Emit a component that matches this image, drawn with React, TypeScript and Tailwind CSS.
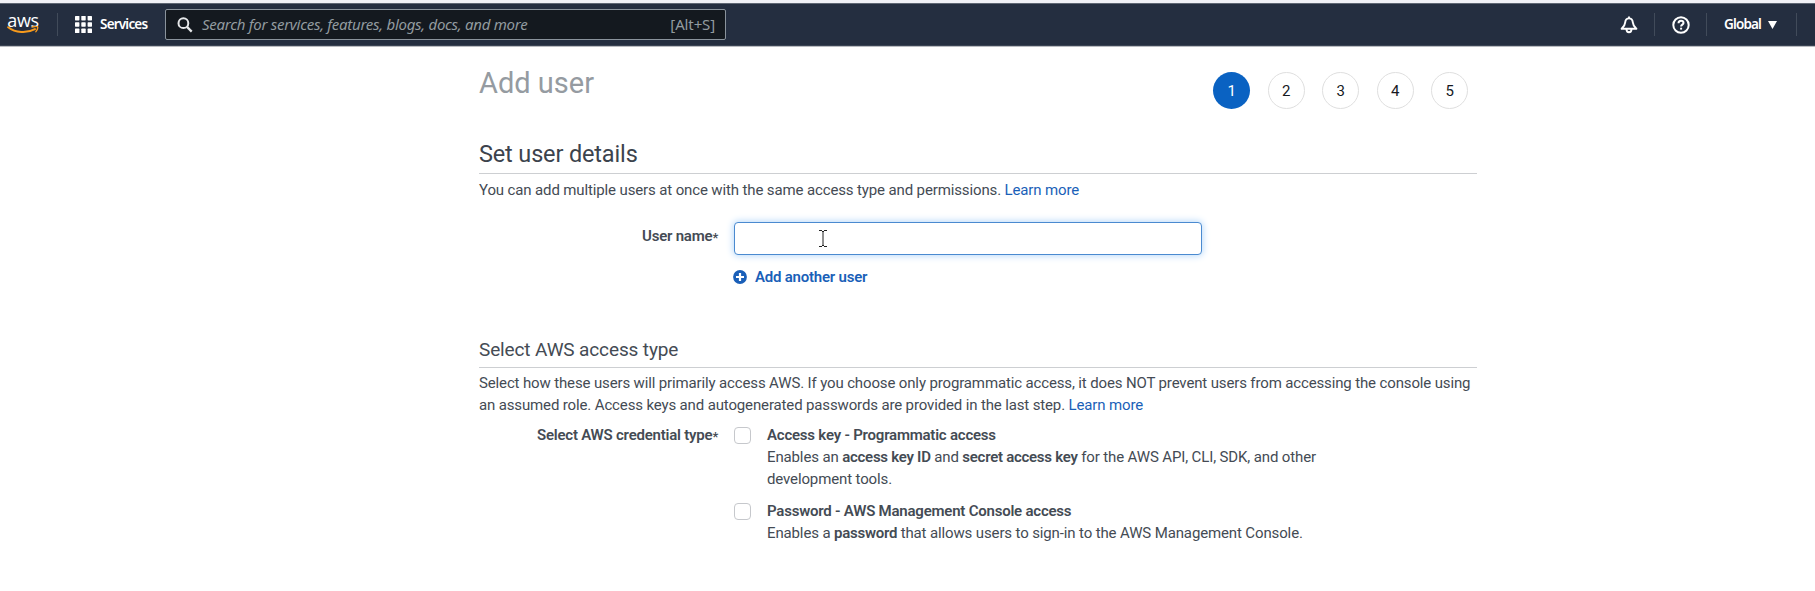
import React from "react";

const Divider = () => <span className="h-[23px] w-px shrink-0 bg-[#414b5a]" />;

function AwsLogo() {
  return (
    <div className="flex h-[24px] w-[34px] flex-col items-center">
      <span className="h-[14px] pt-[2px] font-['Open_Sans','Noto_Sans',sans-serif] text-[18px] leading-[10px] font-medium tracking-[-0.4px] text-white">
        aws
      </span>
      <svg width="34" height="11" viewBox="0 0 34 11" fill="none">
        <path d="M1.500 1.300C9 7.200 21 8 29.500 3.300" stroke="#f79a1c" strokeWidth="2.100" strokeLinecap="round" />
        <path d="M26.500 1.200C29.400.4 32 .4 32.300 1.100c.3.9-.4 3-1.800 4.800" stroke="#f79a1c" strokeWidth="1.500" strokeLinecap="round" />
      </svg>
    </div>
  );
}

function GridIcon() {
  return (
    <svg width="17" height="17" viewBox="0 0 17 17" fill="#fff">
      {[0, 6.3, 12.6].map((y) =>
        [0, 6.3, 12.6].map((x) => <rect key={`${x}-${y}`} x={x} y={y} width="4.4" height="4.4" rx=".6" />),
      )}
    </svg>
  );
}

function TopBar() {
  return (
    <header className="flex h-[47px] flex-col border-t-3 border-b border-[#f0f1f6] border-b-[#b9bbc0] font-['Noto_Sans',sans-serif]">
      <div className="flex h-[43px] items-center border-t border-b border-t-[#5f6774] border-b-[#3a4454] bg-[#242e40]">
        <div className="flex w-[57px] pt-[1px] pl-[6px]">
          <AwsLogo />
        </div>
        <Divider />
        <div className="flex w-[107px] items-center gap-[8px] pl-[17px]">
          <GridIcon />
          <span className="pb-px text-[13.500px] leading-5 font-semibold tracking-[-0.8px] text-white">Services</span>
        </div>
        <div className="flex h-[31px] w-[561px] items-center rounded-[2px] border border-[#8a939c] bg-[#14191f] pr-[10px] pl-[11px] text-[#929b9f]">
          <svg width="16" height="16" viewBox="0 0 16 16" fill="none" stroke="#e6e8ea" strokeWidth="2">
            <circle cx="6.4" cy="6.2" r="4.9" />
            <path d="M10 9.9l4.7 4.7" strokeWidth="2.3" />
          </svg>
          <span className="ml-[9px] pb-[2px] text-[15px] leading-5 tracking-[-0.27px] italic">
            Search for services, features, blogs, docs, and more
          </span>
          <span className="ml-auto pb-[2px] text-[15px] leading-5">[Alt+S]</span>
        </div>
        <div className="ml-auto flex items-center">
          <svg className="mr-[16px]" width="18" height="18" viewBox="0 0 18 18" fill="none" stroke="#fff" strokeWidth="1.900" strokeLinejoin="round">
            <path d="M9 .5v2.200M9 2.400C6.500 2.400 5.400 4.100 5.200 6.300 4.900 9.200 4 10.800 1.600 12.800h14.800c-2.400-2-3.300-3.600-3.600-6.500-.2-2.200-1.300-3.900-3.800-3.900z" />
            <path d="M6.500 13c0 2.200 1 3.300 2.500 3.300s2.500-1.100 2.500-3.300" />
          </svg>
          <Divider />
          <svg className="mr-[16px] ml-[17px]" width="18" height="18" viewBox="0 0 18 18" fill="none" stroke="#fff" strokeWidth="2">
            <circle cx="9" cy="9" r="7.700" />
            <path d="M6.500 7.300c0-1.600 1.100-2.500 2.500-2.500s2.500.9 2.500 2.200c0 1.600-2.400 1.700-2.400 3.500" />
            <path d="M9.100 11.700v1.900" />
          </svg>
          <Divider />
          <span className="ml-[17px] w-[38px] pb-px text-[13.500px] leading-5 font-semibold tracking-[-0.850px] text-white">
            Global
          </span>
          <svg className="mr-[19px] ml-[6px]" width="9" height="8" viewBox="0 0 9 8" fill="#fff">
            <path d="M0 0h9L4.500 8z" />
          </svg>
          <Divider />
          <span className="w-[18px]" />
        </div>
      </div>
    </header>
  );
}

function Steps() {
  return (
    <ol className="mt-[25px] mr-[9px] flex gap-[17.750px]">
      {[1, 2, 3, 4, 5].map((n) => (
        <li
          key={n}
          className={
            n === 1
              ? "flex size-[36.750px] items-center justify-center rounded-full bg-[#0a62c2] pt-px text-[15px] text-white"
              : "flex size-[36.750px] items-center justify-center rounded-full border border-[#dfdfdf] pt-px text-[15px] text-[#16191f]"
          }
        >
          {n}
        </li>
      ))}
    </ol>
  );
}

const Link = ({ children }: { children: React.ReactNode }) => (
  <a href="#" className="text-[#1a5fb8]">
    {children}
  </a>
);

const Strong = ({ children }: { children: React.ReactNode }) => (
  <b className="font-semibold tracking-[-0.27px]">{children}</b>
);

function Label({ children }: { children: React.ReactNode }) {
  return (
    <div className="w-[239px] shrink-0 text-right font-semibold tracking-[-0.22px]">
      {children}
      <span className="inline-block translate-y-[1px] text-[13px] leading-none font-semibold">*</span>
    </div>
  );
}

function Option({ title, children }: { title: string; children: React.ReactNode }) {
  return (
    <label className="flex">
      <span className="mt-[3px] mr-[16px] size-[17px] shrink-0 rounded-[4px] border border-[#c6c8cc] bg-white" />
      <span className="w-[570px]">
        <b className="block font-semibold tracking-[-0.22px]">{title}</b>
        {children}
      </span>
    </label>
  );
}

export default function App() {
  return (
    <div className="h-[591px] overflow-hidden bg-white font-['Roboto',sans-serif] text-[15px] leading-[22px] tracking-[-0.13px] text-[#444b54]">
      <TopBar />
      <main className="ml-[479px] w-[998px]">
        <div className="flex h-[88px] items-start justify-between">
          <h1 className="mt-[18px] text-[29px] leading-[36px] tracking-normal text-[#959ba1]">Add user</h1>
          <Steps />
        </div>
        <h2 className="h-[39px] border-b border-[#cdcfd2] pt-[3px] text-[23.500px] leading-[32px] tracking-[-0.15px] text-[#3c434d]">
          Set user details
        </h2>
        <p className="mt-[5px]">
          You can add multiple users at once with the same access type and permissions. <Link>Learn more</Link>
        </p>
        <div className="mt-[21px] flex">
          <div className="pt-[3px]">
            <Label>User name</Label>
          </div>
          <div className="ml-[16px]">
            <div className="-ml-[0.500px] h-[33px] w-[468px] rounded-[4px] border border-[#4a8ad0] bg-white pt-[7px] pl-[84px] shadow-[0_0_7px_1px_#b9dafa]">
              <svg width="8" height="17" viewBox="0 0 8 17" fill="none" stroke="#222" strokeWidth="1">
                <path d="M0 .5h3M5 .5h3M3 1.500h2M4 1.500v14M3 15.500h2M0 16.500h3M5 16.500h3" />
              </svg>
            </div>
            <button className="mt-[11px] -ml-px flex items-center gap-[8px] font-semibold tracking-[-0.22px] text-[#1a5fb8]">
              <svg width="14" height="14" viewBox="0 0 14 14">
                <circle cx="7" cy="7" r="6.900" fill="#1a5fb8" />
                <path d="M7 3v8M3 7h8" stroke="#fff" strokeWidth="2.200" />
              </svg>
              Add another user
            </button>
          </div>
        </div>
        <h3 className="mt-[40px] h-[40px] border-b border-[#cdcfd2] pt-[7px] text-[19px] leading-[30px] tracking-[-0.13px]">
          Select AWS access type
        </h3>
        <p className="mt-[4px] w-[998px] tracking-[-0.14px]">
          Select how these users will primarily access AWS. If you choose only programmatic access, it does NOT prevent users from
          accessing the console using
          <br />
          an assumed role. Access keys and autogenerated passwords are provided in the last step. <Link>Learn more</Link>
        </p>
        <div className="mt-[8px] flex">
          <Label>Select AWS credential type</Label>
          <div className="ml-[16px] flex flex-col gap-[10px]">
            <Option title="Access key - Programmatic access">
              Enables an <Strong>access key ID</Strong> and <Strong>secret access key</Strong> for the AWS API, CLI, SDK, and other
              <br />
              development tools.
            </Option>
            <Option title="Password - AWS Management Console access">
              Enables a <Strong>password</Strong> that allows users to sign-in to the AWS Management Console.
            </Option>
          </div>
        </div>
      </main>
    </div>
  );
}
